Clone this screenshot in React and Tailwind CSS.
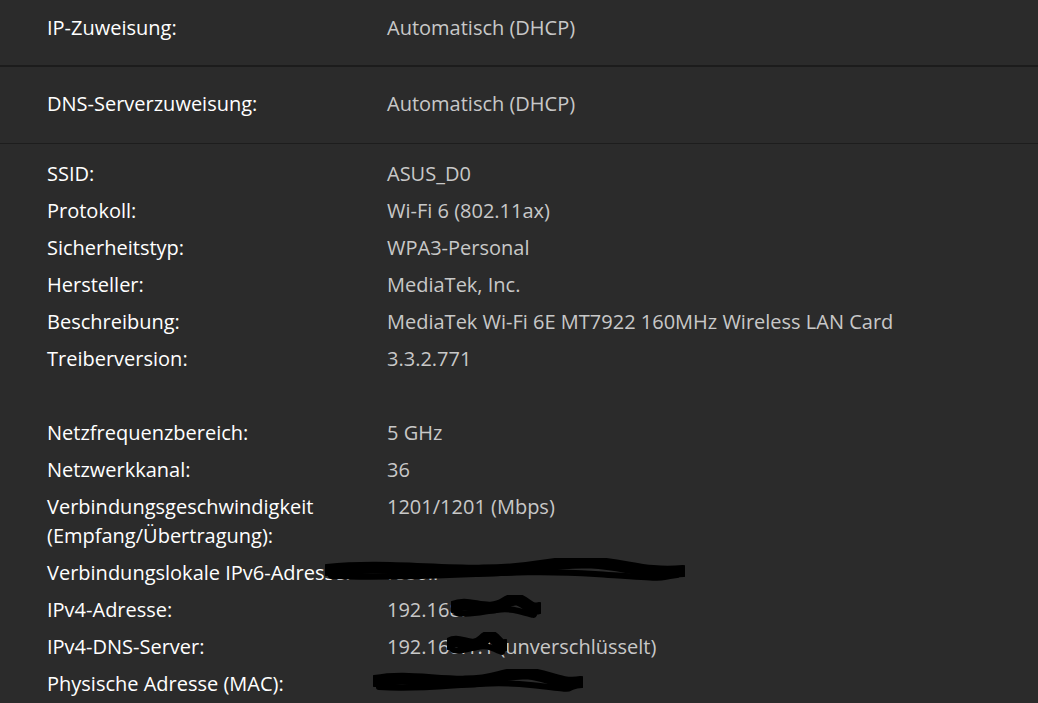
const groupA = [
  ['SSID:', 'ASUS_D0'],
  ['Protokoll:', 'Wi-Fi 6 (802.11ax)'],
  ['Sicherheitstyp:', 'WPA3-Personal'],
  ['Hersteller:', 'MediaTek, Inc.'],
  ['Beschreibung:', 'MediaTek Wi-Fi 6E MT7922 160MHz Wireless LAN Card'],
  ['Treiberversion:', '3.3.2.771'],
];

function Scribble({ width, className = '' }) {
  // redaction scribble drawn over the value
  return (
    <svg width={width} height="28" viewBox={`0 0 ${width} 28`} className={className}>
      <path
        d={`M2 12 C ${width * 0.2} 4, ${width * 0.4} 20, ${width * 0.6} 8 S ${width * 0.85} 18, ${width - 2} 13`}
        stroke="#000"
        strokeWidth="12"
        fill="none"
        strokeLinecap="round"
      />
      <path
        d={`M6 18 C ${width * 0.3} 22, ${width * 0.5} 10, ${width * 0.75} 16 S ${width * 0.9} 20, ${width - 8} 17`}
        stroke="#000"
        strokeWidth="6"
        fill="none"
        strokeLinecap="round"
      />
    </svg>
  );
}

function Row({ label, children }) {
  return (
    <div className="flex leading-[29px]">
      <div className="w-[340px] shrink-0 text-white">{label}</div>
      <div className="text-[#c8c8c8]">{children}</div>
    </div>
  );
}

export default function App() {
  return (
    <div
      className="w-[1038px] h-[703px] overflow-hidden bg-[#2b2b2b] text-[20px]"
      style={{ fontFamily: '"Open Sans", "Noto Sans", sans-serif' }}
    >
      {/* Zuweisung rows */}
      <div className="h-[67px] pb-[10px] flex items-center pl-[47px] border-b-2 border-[#1c1c1c]">
        <div className="w-[340px] text-white">IP-Zuweisung:</div>
        <div className="text-[#c8c8c8]">Automatisch (DHCP)</div>
      </div>
      <div className="h-[77px] pb-[2px] flex items-center pl-[47px] border-b border-[#1d1d1d]">
        <div className="w-[340px] text-white">DNS-Serverzuweisung:</div>
        <div className="text-[#c8c8c8]">Automatisch (DHCP)</div>
      </div>

      {/* Properties */}
      <div className="pl-[47px] pt-[15px] flex flex-col gap-2">
        {groupA.map(([l, v]) => (
          <Row key={l} label={l}>{v}</Row>
        ))}
        <div className="h-[29px]" />
        <Row label="Netzfrequenzbereich:">5 GHz</Row>
        <Row label="Netzwerkkanal:">36</Row>
        <Row label={<>Verbindungsgeschwindigkeit<br />(Empfang/Übertragung):</>}>1201/1201 (Mbps)</Row>
        <Row label="Verbindungslokale IPv6-Adresse:">
          <span className="relative inline-block">
            fe80::
            <Scribble width={360} className="absolute left-[-62px] top-0" />
          </span>
        </Row>
        <Row label="IPv4-Adresse:">
          <span className="relative inline-block">
            192.168.
            <Scribble width={90} className="absolute left-[64px] top-0" />
          </span>
        </Row>
        <Row label="IPv4-DNS-Server:">
          <span className="relative inline-block">
            192.168.1.1 (unverschlüsselt)
            <Scribble width={60} className="absolute left-[60px] top-0" />
          </span>
        </Row>
        <Row label="Physische Adresse (MAC):">
          <span className="relative inline-block">
            &nbsp;
            <Scribble width={210} className="absolute left-[-14px] top-0" />
          </span>
        </Row>
      </div>
    </div>
  );
}
